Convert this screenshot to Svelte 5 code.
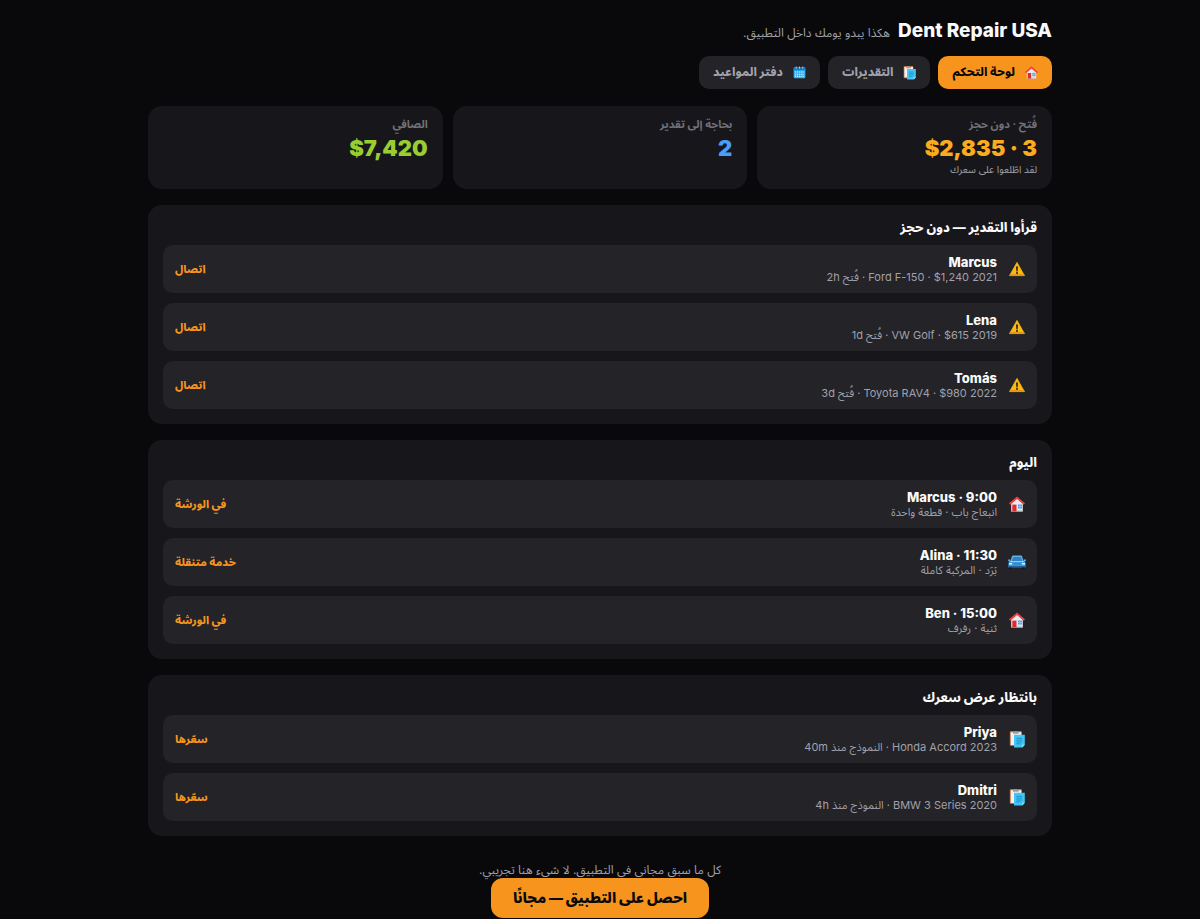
<script>
    // Demo dashboard shown on the landing page (Arabic, right to left)
    let activeTab = $state('dashboard');

    const tabs = [
        { id: 'dashboard', icon: 'house', label: 'لوحة التحكم' },
        { id: 'estimates', icon: 'clipboard', label: 'التقديرات' },
        { id: 'calendar', icon: 'calendar', label: 'دفتر المواعيد' }
    ];

    const stats = [
        { label: 'فُتح · دون حجز', value: '3 · $2,835', note: 'لقد اطّلعوا على سعرك', tone: 'amber' },
        { label: 'بحاجة إلى تقدير', value: '2', tone: 'blue' },
        { label: 'الصافي', value: '$7,420', tone: 'green' }
    ];

    const sections = [
        {
            title: 'قرأوا التقدير — دون حجز',
            clickable: true,
            rows: [
                { icon: 'warning', name: 'Marcus', detail: '2021 Ford F-150 · $1,240 · فُتح 2h', action: 'اتصال' },
                { icon: 'warning', name: 'Lena', detail: '2019 VW Golf · $615 · فُتح 1d', action: 'اتصال' },
                { icon: 'warning', name: 'Tomás', detail: '2022 Toyota RAV4 · $980 · فُتح 3d', action: 'اتصال' }
            ]
        },
        {
            title: 'اليوم',
            clickable: false,
            rows: [
                { icon: 'house', name: '9:00 · Marcus', detail: 'انبعاج باب · قطعة واحدة', action: 'في الورشة' },
                { icon: 'car', name: '11:30 · Alina', detail: 'بَرَد · المركبة كاملة', action: 'خدمة متنقلة' },
                { icon: 'house', name: '15:00 · Ben', detail: 'ثنية · رفرف', action: 'في الورشة' }
            ]
        },
        {
            title: 'بانتظار عرض سعرك',
            clickable: true,
            rows: [
                { icon: 'clipboard', name: 'Priya', detail: '2023 Honda Accord · النموذج منذ 40m', action: 'سعّرها' },
                { icon: 'clipboard', name: 'Dmitri', detail: '2020 BMW 3 Series · النموذج منذ 4h', action: 'سعّرها' }
            ]
        }
    ];
</script>

{#snippet icon(name)}
    <svg class="icon" viewBox="0 0 16 16" aria-hidden="true">
        {#if name === 'house'}
            <path d="M2.2 7.5 8 2.4l5.8 5.1V15.4H2.2z" fill="#e9eaee" />
            <path d="M2.2 14.4h11.6v1H2.2z" fill="#b9bcc6" />
            <path d="M8 .4 0 7.3l1.2 1.5L8 3l6.8 5.8L16 7.3z" fill="#ee4043" />
            <path d="M3.3 8.6h4.2v6.8H3.3z" fill="#e02a2e" />
            <path d="M9 8.5h3.9v4H9z" fill="#4b9be8" />
            <path d="M10.95 8.5v4M9 10.5h3.9" stroke="#cfe4fa" stroke-width=".5" />
        {:else if name === 'clipboard'}
            <rect x=".8" y="0" width="12" height="15" rx="1" fill="#c0683c" />
            <rect x="1.7" y="1.2" width="10.6" height="12.8" fill="#f3f1f1" />
            <path d="M4 .8h1.5a1.4 1.4 0 0 1 2.6 0h1.5v1.9H4z" fill="#9b9da3" />
            <path d="M5 3.8h10.8v10L13.2 16.6H5z" fill="#43c4f3" />
            <path d="M15.8 13.8h-2.6v2.8z" fill="#8fe0fb" />
            <path d="M7.4 7.4h5.8M7.4 9.2h5.8M7.4 11h5.8M7.4 12.8h4" stroke="#168fcb" stroke-width=".9" />
        {:else if name === 'calendar'}
            <rect x=".8" y="1.6" width="14.4" height="13.6" rx="1.6" fill="#3bb2f2" />
            <path d="M.8 5.2V3.2a1.6 1.6 0 0 1 1.6-1.6h11.2a1.6 1.6 0 0 1 1.6 1.6v2z" fill="#1477c9" />
            <path d="M4 .6v2.6M8 .6v2.6M12 .6v2.6" stroke="#b9dff8" stroke-width="1" />
            <path d="M2.6 7.4h10.8M2.6 10.1h10.8M2.6 12.8h10.8" stroke="#d4effd" stroke-width="1.3" stroke-dasharray="1.3 1" />
        {:else if name === 'car'}
            <path d="M2.7 3.1C3 2 3.6 1.6 4.4 1.6h7.2c.8 0 1.4.4 1.7 1.5l1.3 4.3H1.4z" fill="#5cb3ee" />
            <path d="M3.8 3.7c.2-.6.5-.8 1-.8h6.4c.5 0 .8.2 1 .8l.9 3.2H2.9z" fill="#3a7fc0" />
            <path d="M-.8 5.6h2.2v1.6H-.8zM14.6 5.6h2.2v1.6h-2.2z" fill="#58b3ec" />
            <path d="M.9 6.9h14.2l1.5 2v4.3H-.6V8.9z" fill="#3b9be0" />
            <path d="M.9 6.9h14.2l.7 1.1H.2z" fill="#83cdf6" />
            <path d="M0 9h3v1.5H0zM13 9h3v1.5h-3z" fill="#e1f3fd" />
            <path d="M4.5 9.3h7v1.2h-7z" fill="#2a80c4" />
            <path d="M-.6 12h17.2v1.6H-.6z" fill="#235e96" />
            <path d="M.1 13.6h2.6V15H.1zM13.3 13.6h2.6V15h-2.6z" fill="#111722" />
        {:else if name === 'warning'}
            <path d="M8 1.4 15.4 14.6H.6z" fill="#fdb913" stroke="#fdb913" stroke-width=".8" stroke-linejoin="round" />
            <path d="M1 13h14l.7 1.7H.3z" fill="#e6960f" />
            <path d="M7 5.4h2l-.4 5.1H7.4z" fill="#2a2013" />
            <circle cx="8" cy="12.1" r="1" fill="#2a2013" />
        {/if}
    </svg>
{/snippet}

<main class="demo" dir="rtl" lang="ar">
    <header class="heading">
        <h1>Dent Repair USA</h1>
        <p>هكذا يبدو يومك داخل التطبيق.</p>
    </header>

    <nav class="tabs">
        {#each tabs as tab (tab.id)}
            <button
                type="button"
                class="tab"
                class:active={activeTab === tab.id}
                aria-pressed={activeTab === tab.id}
                onclick={() => (activeTab = tab.id)}
            >
                {@render icon(tab.icon)}
                <span>{tab.label}</span>
            </button>
        {/each}
    </nav>

    <div class="stats">
        {#each stats as stat (stat.label)}
            <div class="stat">
                <div class="stat-label">{stat.label}</div>
                <div class="stat-value {stat.tone}">{stat.value}</div>
                {#if stat.note}
                    <div class="stat-note">{stat.note}</div>
                {/if}
            </div>
        {/each}
    </div>

    {#each sections as section (section.title)}
        <section class="panel">
            <h2>{section.title}</h2>
            <ul>
                {#each section.rows as row (row.name)}
                    <li class="row">
                        {@render icon(row.icon)}
                        <div class="info">
                            <div class="name">{row.name}</div>
                            <div class="detail">{row.detail}</div>
                        </div>
                        {#if section.clickable}
                            <button type="button" class="action">{row.action}</button>
                        {:else}
                            <span class="action">{row.action}</span>
                        {/if}
                    </li>
                {/each}
            </ul>
        </section>
    {/each}

    <footer class="cta">
        <p>كل ما سبق مجاني في التطبيق. لا شيء هنا تجريبي.</p>
        <a class="cta-button" href="#app">احصل على التطبيق — مجانًا</a>
    </footer>
</main>

<style>
    :global(body) {
        background: #09090b;
    }

    .demo {
        box-sizing: border-box;
        max-width: 936px;
        margin: 0 auto;
        padding: 19px 16px 0;
        color: #fafafa;
        font-family: Inter, 'Noto Sans Arabic', 'Noto Sans', 'DejaVu Sans', sans-serif;
    }

    h1,
    h2,
    p,
    ul {
        margin: 0;
        padding: 0;
    }

    button {
        border: 0;
        font-family: inherit;
        cursor: pointer;
    }

    .icon {
        display: block;
        flex: none;
        width: 16px;
        height: 16px;
        overflow: visible;
    }

    .heading {
        display: flex;
        align-items: baseline;
        gap: 8px;
        height: 24px;
        line-height: 24px;
    }

    h1 {
        font-size: 19px;
        font-weight: 800;
    }

    .heading p {
        color: #a1a1aa;
        font-size: 12px;
    }

    .tabs {
        display: flex;
        gap: 8px;
        margin-top: 13px;
    }

    .tab {
        display: flex;
        align-items: center;
        gap: 10px;
        height: 33px;
        padding: 0 14px;
        border-radius: 10px;
        background: #232328;
        color: #a1a1aa;
        font-size: 12px;
        font-weight: 800;
    }

    .tab .icon {
        width: 13px;
        height: 13px;
    }

    .tab.active {
        background: #f7941d;
        color: #09090b;
    }

    .stats {
        display: grid;
        grid-template-columns: repeat(3, 1fr);
        gap: 10px;
        margin-top: 17px;
    }

    .stat {
        box-sizing: border-box;
        min-height: 83px;
        padding: 10px 15px;
        border-radius: 14px;
        background: #17171b;
    }

    .stat-label {
        color: #71717a;
        font-size: 11px;
        font-weight: 700;
        line-height: 16px;
    }

    .stat-value {
        font-size: 22px;
        font-weight: 900;
        line-height: 32px;
    }

    .amber {
        color: #fbab1f;
    }

    .blue {
        color: #4a9df8;
    }

    .green {
        color: #9acd32;
    }

    .stat-note {
        color: #a1a1aa;
        font-size: 10px;
        line-height: 10px;
    }

    .panel {
        margin-top: 16px;
        padding: 14px 15px 15px;
        border-radius: 14px;
        background: #17171b;
    }

    h2 {
        font-size: 13px;
        font-weight: 800;
        line-height: 16px;
    }

    ul {
        display: flex;
        flex-direction: column;
        gap: 10px;
        margin-top: 10px;
        list-style: none;
    }

    .row {
        display: flex;
        align-items: center;
        gap: 12px;
        height: 48px;
        padding: 0 12px;
        border-radius: 10px;
        background: #232328;
    }

    .info {
        flex: 1;
        min-width: 0;
    }

    .name {
        font-size: 13px;
        font-weight: 800;
        line-height: 16px;
    }

    .detail {
        color: #a1a1aa;
        font-size: 11px;
        line-height: 14px;
    }

    .action {
        padding: 0;
        background: none;
        color: #f7941d;
        font-size: 11px;
        font-weight: 800;
    }

    .cta {
        display: flex;
        flex-direction: column;
        align-items: center;
        margin-top: 26px;
    }

    .cta p {
        color: #a1a1aa;
        font-size: 12px;
        line-height: 16px;
    }

    .cta-button {
        padding: 0 22px;
        border-radius: 12px;
        background: #f7941d;
        color: #09090b;
        font-size: 14px;
        font-weight: 900;
        line-height: 40px;
        text-decoration: none;
    }
</style>
